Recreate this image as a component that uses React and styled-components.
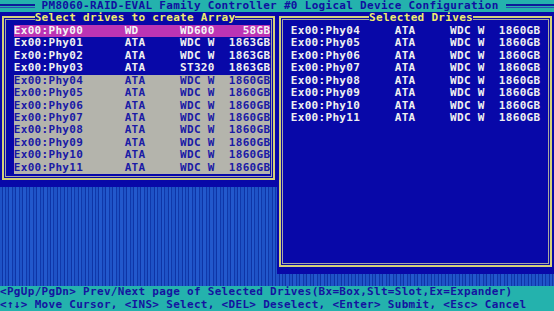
import React from 'react';
import styled, { createGlobalStyle } from 'styled-components';

const ROW = 311 / 25;
const CH = 554 / 80;

const leftDrives = [
  { name: 'Ex00:Phy00', kind: 'WD', model: 'WD600', size: '58GB', tone: 'active' },
  { name: 'Ex00:Phy01', kind: 'ATA', model: 'WDC W', size: '1863GB', tone: 'free' },
  { name: 'Ex00:Phy02', kind: 'ATA', model: 'WDC W', size: '1863GB', tone: 'free' },
  { name: 'Ex00:Phy03', kind: 'ATA', model: 'ST320', size: '1863GB', tone: 'free' },
  ...['04', '05', '06', '07', '08', '09', '10', '11'].map((n) => ({
    name: `Ex00:Phy${n}`, kind: 'ATA', model: 'WDC W', size: '1860GB', tone: 'used',
  })),
];

const rightDrives = ['04', '05', '06', '07', '08', '09', '10', '11'].map((n) => ({
  name: `Ex00:Phy${n}`, kind: 'ATA', model: 'WDC W', size: '1860GB', tone: 'free',
}));

const tones = {
  active: { bg: '#bc34b4', fg: '#f4f4f4' },
  free: { bg: 'transparent', fg: '#f0f0f0' },
  used: { bg: '#b4b4ac', fg: '#1a1aa6' },
};

const cols = (list) => list.map((n) => `${n * CH}px`).join(' ');

export default function App() {
  return (
    <>
      <GlobalStyle />
      <Screen>
        <TitleBar>
          <Rule $cells={5} />
          <TitleText>PM8060-RAID-EVAL Family Controller #0 Logical Device Configuration</TitleText>
          <Rule $grow />
        </TitleBar>

        <Workspace>
          <Panel $rows={14}>
            <Legend $at={5}>Select drives to create Array</Legend>
            <Frame>
              {leftDrives.map((d) => (
                <DriveRow key={d.name} $cols={cols([16, 8, 7, 6])} $tone={d.tone}>
                  <span>{d.name}</span>
                  <span>{d.kind}</span>
                  <span>{d.model}</span>
                  <Size>{d.size}</Size>
                </DriveRow>
              ))}
            </Frame>
          </Panel>

          <Panel $rows={21}>
            <Legend $at={13.3}>Selected Drives</Legend>
            <Frame>
              {rightDrives.map((d) => (
                <DriveRow key={d.name} $cols={cols([15, 8, 7, 6])} $tone={d.tone}>
                  <span>{d.name}</span>
                  <span>{d.kind}</span>
                  <span>{d.model}</span>
                  <Size>{d.size}</Size>
                </DriveRow>
              ))}
            </Frame>
          </Panel>
        </Workspace>

        <Footer>
          <Hint>&lt;PgUp/PgDn&gt; Prev/Next page of Selected Drives(Bx=Box,Slt=Slot,Ex=Expander)</Hint>
          <Hint>&lt;↑↓&gt; Move Cursor, &lt;INS&gt; Select, &lt;DEL&gt; Deselect, &lt;Enter&gt; Submit, &lt;Esc&gt; Cancel</Hint>
        </Footer>
      </Screen>
    </>
  );
}

const GlobalStyle = createGlobalStyle`
  html, body {
    margin: 0;
    padding: 0;
    background: #0808a8;
  }
`;

const Screen = styled.div`
  width: 554px;
  height: 311px;
  overflow: hidden;
  display: grid;
  grid-template-rows: ${ROW}px 1fr ${ROW * 2}px;
  font-family: "DejaVu Sans Mono", "Liberation Mono", monospace;
  font-weight: bold;
  font-size: 11px;
  letter-spacing: ${CH - 11 * 0.602}px;
  line-height: ${ROW}px;
  white-space: pre;
`;

const TitleBar = styled.header`
  display: flex;
  align-items: center;
  background: #24b2ad;
  color: #1010a0;
`;

const Rule = styled.span`
  flex: ${(p) => (p.$grow ? 1 : 'none')};
  width: ${(p) => (p.$cells ? `${p.$cells * CH}px` : 'auto')};
  height: 4px;
  margin-top: -1px;
  box-sizing: border-box;
  border-top: 2px solid #0c1c98;
  border-bottom: 1px solid #2c4cb4;
`;

const TitleText = styled.span`
  margin: 0 ${CH}px;
`;

const Workspace = styled.main`
  display: grid;
  grid-template-columns: ${CH * 40}px ${CH * 40}px;
  align-items: start;
  background-color: #1a4cc0;
  background-image: repeating-linear-gradient(
    90deg,
    #1e52c6 0 1.5px,
    #0e34a6 1.5px 2.5px,
    #2258cc 2.5px 5px,
    #1038aa 5px 6px,
    #1e52c6 6px ${CH}px
  );
`;

const Panel = styled.section`
  position: relative;
  height: ${(p) => p.$rows * ROW}px;
  box-sizing: border-box;
  padding: 4px 2px 6.5px;
  background: #0808a8;
`;

const Legend = styled.h2`
  position: absolute;
  top: 0;
  left: ${(p) => p.$at * CH}px;
  margin: 0;
  font: inherit;
  letter-spacing: inherit;
  line-height: ${ROW}px;
  color: #f0ec6c;
  background: #0808a8;
`;

const Frame = styled.div`
  height: 100%;
  box-sizing: border-box;
  border: 2px solid #d4d07a;
  box-shadow: inset 0 0 0 1px #0808a8, inset 0 0 0 2px #a8a8a2;
  padding: ${ROW - 6}px 0 0 ${CH * 2 - 4}px;
`;

const DriveRow = styled.div`
  display: grid;
  grid-template-columns: ${(p) => p.$cols};
  width: fit-content;
  height: ${ROW}px;
  background: ${(p) => tones[p.$tone].bg};
  color: ${(p) => tones[p.$tone].fg};
`;

const Size = styled.span`
  justify-self: end;
  margin-right: -${CH - 11 * 0.602}px;
`;

const Footer = styled.footer`
  background: #24b2ad;
  color: #1414a0;
`;

const Hint = styled.div`
  height: ${ROW}px;
`;
